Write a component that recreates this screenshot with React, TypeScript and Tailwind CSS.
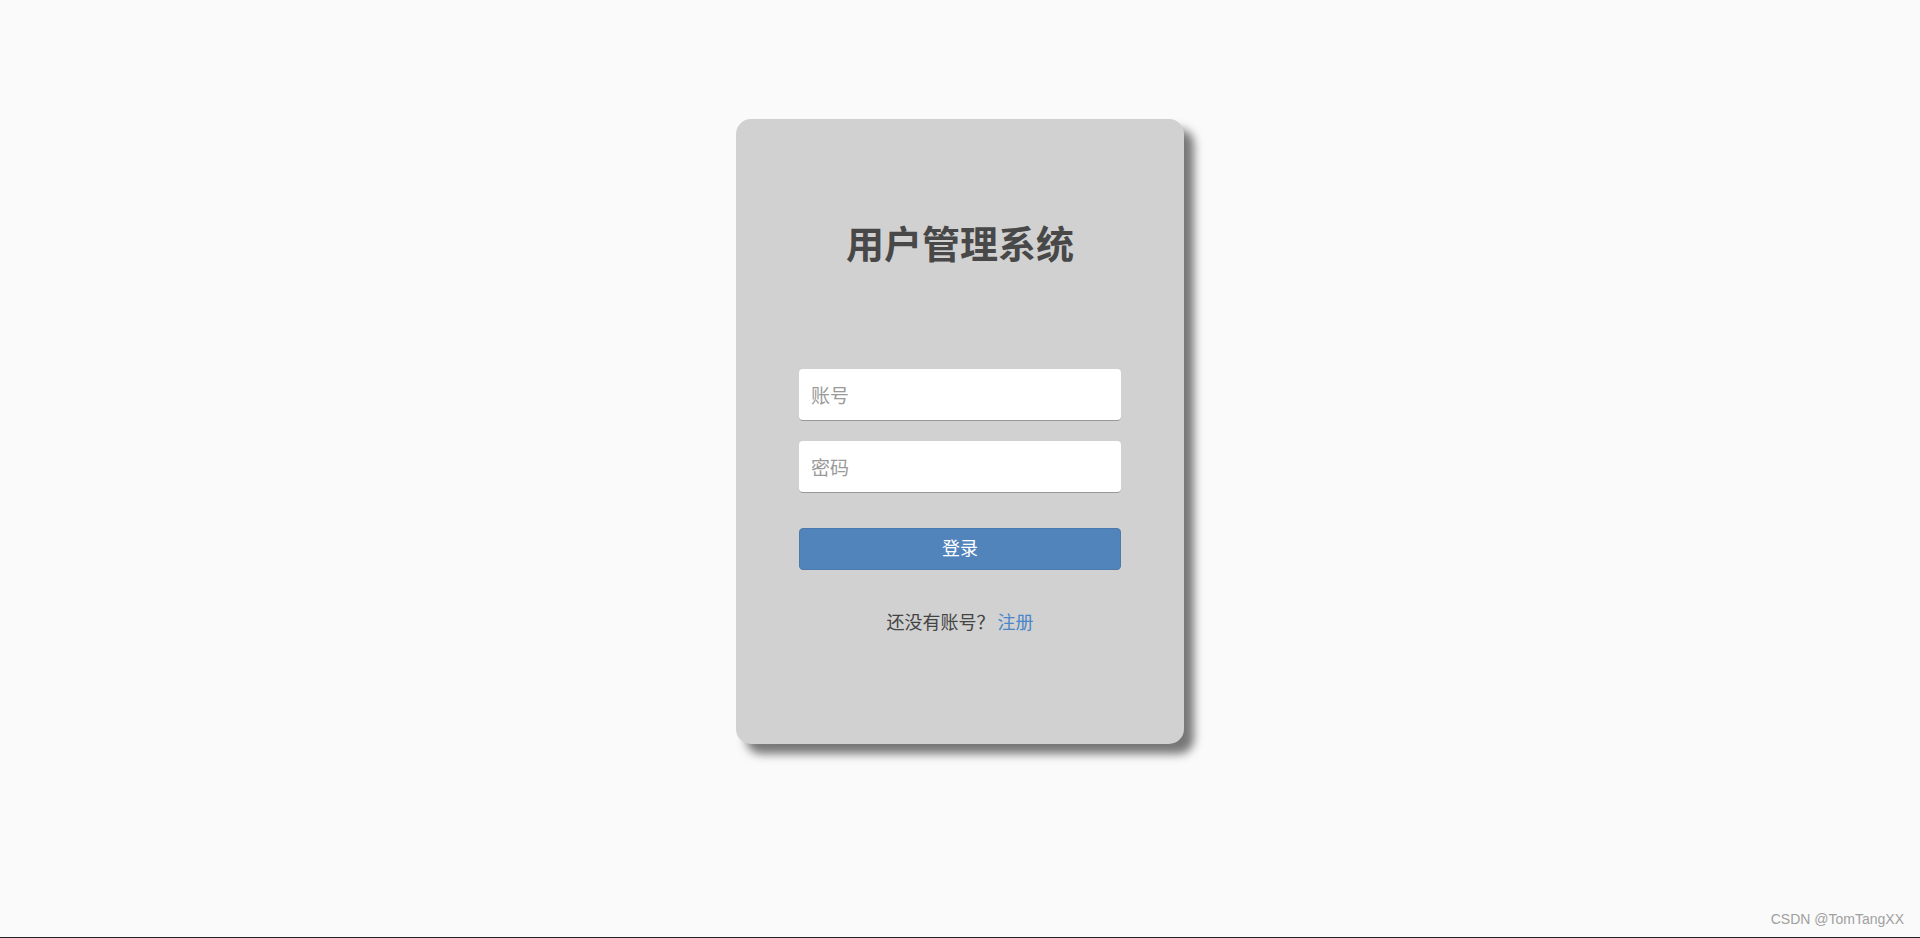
import React, { useState } from 'react';

const cjk = "font-['Microsoft_YaHei','Noto_Sans_CJK_SC',sans-serif]";

export default function App() {
  const [username, setUsername] = useState('');
  const [password, setPassword] = useState('');

  return (
    <div className={`relative h-[938px] w-full overflow-hidden bg-[#fafafa] ${cjk}`}>
      <div className="mx-auto mt-[119px] flex h-[625px] w-[448px] flex-col items-center rounded-[15px] bg-[#d1d1d1] pt-[98px] shadow-[10px_10px_10px_#777]">
        <h1 className="text-[38px] font-bold leading-[50px] text-[#484848]">用户管理系统</h1>

        <form className="mt-[102px] flex w-[322px] flex-col" onSubmit={(e) => e.preventDefault()}>
          <input
            type="text"
            value={username}
            onChange={(e) => setUsername(e.target.value)}
            placeholder="账号"
            className="h-[52px] w-full rounded-[4px] border-b border-[#999] bg-white px-3 text-[19px] text-[#333] outline-none placeholder:text-[#9a9a9a]"
          />
          <input
            type="password"
            value={password}
            onChange={(e) => setPassword(e.target.value)}
            placeholder="密码"
            className="mt-5 h-[52px] w-full rounded-[4px] border-b border-[#999] bg-white px-3 text-[19px] text-[#333] outline-none placeholder:text-[#9a9a9a]"
          />
          <button
            type="submit"
            className="mt-[35px] flex h-[42px] w-full items-center justify-center rounded-[4px] border border-[#4a79ad] bg-[#5284bc] pb-[3px] text-[18px] text-white"
          >
            登录
          </button>
        </form>

        <p className="mt-[39px] text-[18px] leading-[24px] text-[#444]">
          还没有账号？<a href="#" className="ml-[3px] text-[#4a86c8]">注册</a>
        </p>
      </div>

      <span className="absolute bottom-[8px] right-[16px] font-['Liberation_Sans',sans-serif] text-[14px] text-[#a0a0a0]">
        CSDN @TomTangXX
      </span>
      <div className="absolute bottom-0 left-0 h-px w-full bg-[#222]" />
    </div>
  );
}
